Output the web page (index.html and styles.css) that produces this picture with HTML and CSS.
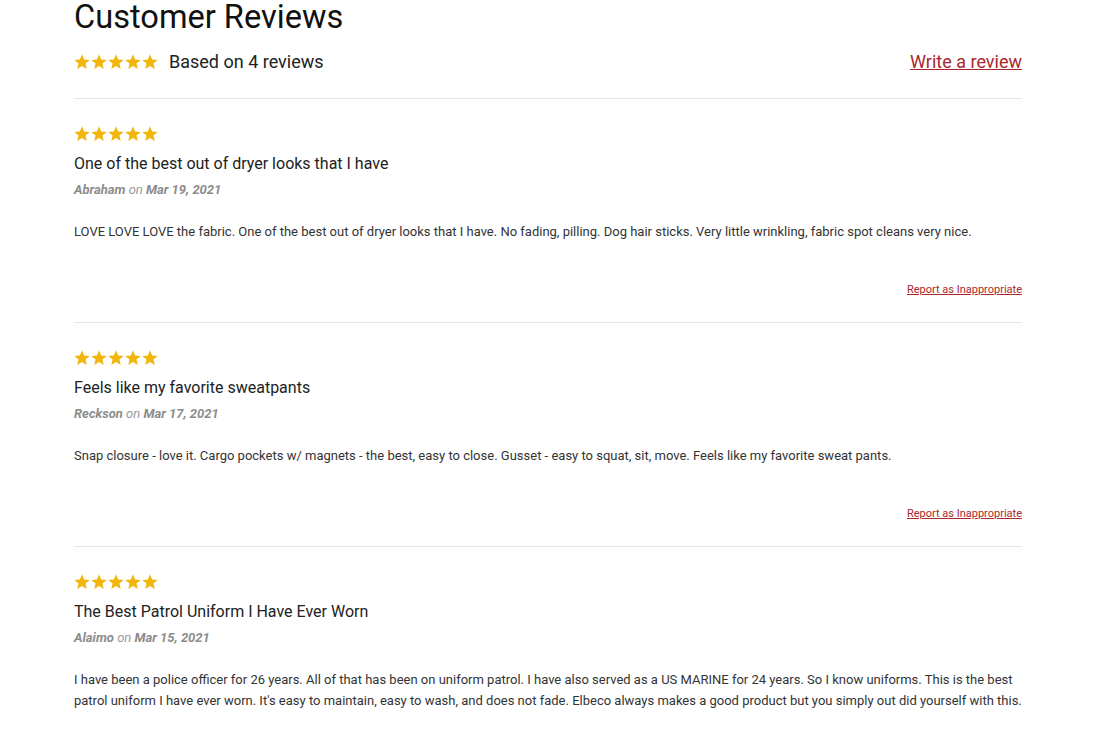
FILE: index.html
```html
<!DOCTYPE html>
<html lang="en">
<head>
    <meta charset="UTF-8">
    <meta name="viewport" content="width=device-width, initial-scale=1.0">
    <title>Customer Reviews</title>
    <link rel="stylesheet" href="styles.css">
</head>
<body>
    <div class="container">
        <h2 class="title">Customer Reviews</h2>
        <div class="summary">
            <div class="summary-left">
                <span class="stars" id="summary-stars"></span>
                <span class="summary-text">Based on 4 reviews</span>
            </div>
            <a href="#" class="write-link">Write a review</a>
        </div>

        <div id="reviews-list">
            <!-- reviews are rendered by the script below -->
        </div>
    </div>

    <script>
        const reviews = [
            {
                title: 'One of the best out of dryer looks that I have',
                author: 'Abraham',
                date: 'Mar 19, 2021',
                body: 'LOVE LOVE LOVE the fabric. One of the best out of dryer looks that I have. No fading, pilling. Dog hair sticks. Very little wrinkling, fabric spot cleans very nice.'
            },
            {
                title: 'Feels like my favorite sweatpants',
                author: 'Reckson',
                date: 'Mar 17, 2021',
                body: 'Snap closure - love it. Cargo pockets w/ magnets - the best, easy to close. Gusset - easy to squat, sit, move. Feels like my favorite sweat pants.'
            },
            {
                title: 'The Best Patrol Uniform I Have Ever Worn',
                author: 'Alaimo',
                date: 'Mar 15, 2021',
                body: 'I have been a police officer for 26 years. All of that has been on uniform patrol. I have also served as a US MARINE for 24 years. So I know uniforms. This is the best patrol uniform I have ever worn. It\'s easy to maintain, easy to wash, and does not fade. Elbeco always makes a good product but you simply out did yourself with this.'
            }
        ];

        const star = '<svg viewBox="0 0 24 24"><path d="M12 .5L15.2 8.19 23.5 8.85 17.17 14.27 19.11 22.37 12 18.03 4.89 22.37 6.83 14.27 .5 8.85 8.8 8.19z"/></svg>';
        document.getElementById('summary-stars').innerHTML = star.repeat(5);

        const list = document.getElementById('reviews-list');
        reviews.forEach(review => {
            const item = document.createElement('div');
            item.className = 'review';
            item.innerHTML = `
                <div class="stars">${star.repeat(5)}</div>
                <h3 class="review-title">${review.title}</h3>
                <div class="review-meta"><strong>${review.author}</strong> on <strong>${review.date}</strong></div>
                <p class="review-body">${review.body}</p>
                <div class="review-footer"><a href="#" class="report-link">Report as Inappropriate</a></div>
            `;
            list.appendChild(item);
        });
    </script>
</body>
</html>
```

FILE: styles.css
```css
body {
    margin: 0;
    background: #fff;
    font-family: Roboto, "Liberation Sans", Arial, sans-serif;
    color: #222;
}
.container {
    width: 948px;
    margin: 0 auto;
}
.title {
    margin: -2px 0 0;
    font-size: 32.6px;
    font-weight: 400;
    line-height: 38px;
    color: #111;
}
.summary {
    display: flex;
    justify-content: space-between;
    align-items: center;
    margin-top: 14px;
    padding-bottom: 24px;
    border-bottom: 1px solid #e6e6e6;
}
.summary-left {
    display: flex;
    align-items: center;
    gap: 11px;
}
.summary-text {
    font-size: 18px;
    line-height: 24px;
    color: #222;
}
.write-link {
    font-size: 18px;
    line-height: 24px;
    color: #a8282d;
}
.stars {
    display: flex;
    gap: 1px;
    height: 16px;
}
.stars svg {
    width: 16px;
    height: 16px;
    fill: #f1b50c;
}
.review {
    padding: 27px 0 25px;
    border-bottom: 1px solid #e6e6e6;
}
.review-title {
    margin: 12px 0 0;
    font-size: 16px;
    font-weight: 400;
    line-height: 20px;
    color: #222;
}
.review-meta {
    margin-top: 7px;
    font-size: 13px;
    line-height: 18px;
    font-style: italic;
    color: #9a9a9a;
}
.review-meta strong {
    font-weight: 700;
    color: #8c8c8c;
}
.review-body {
    margin: 22px 0 0;
    font-size: 13px;
    line-height: 21px;
    color: #333;
}
.review-footer {
    margin-top: 36px;
    text-align: right;
}
.report-link {
    font-size: 11px;
    line-height: 14px;
    color: #a8282d;
}
```
